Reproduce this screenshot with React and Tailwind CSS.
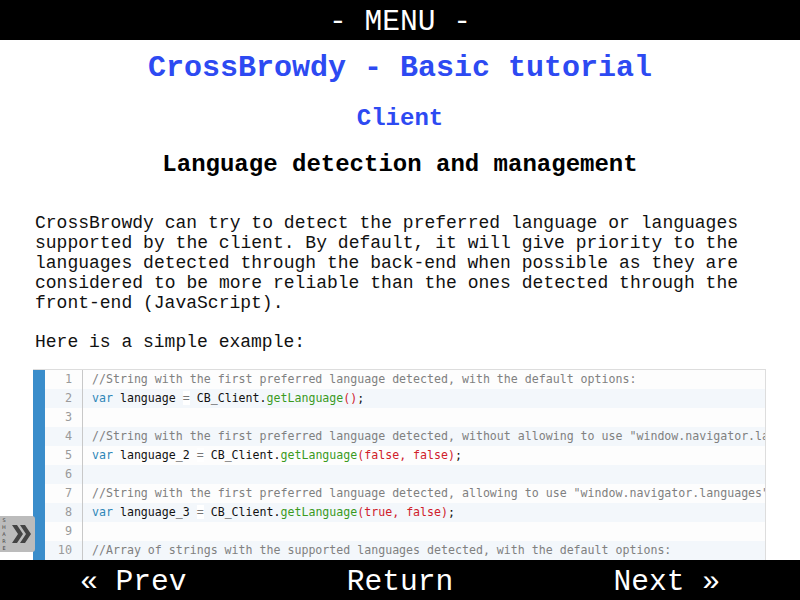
import React from 'react'

const C = ({ children }) => <span className="text-[#808080]">{children}</span>
const K = ({ children }) => <span className="text-[#2e86b8]">{children}</span>
const F = ({ children }) => <span className="text-[#3a9a1e]">{children}</span>
const R = ({ children }) => <span className="text-[#d0202a]">{children}</span>
const Eq = () => <span className="bg-white text-[#777]">=</span>

const lines = [
  <C>//String with the first preferred language detected, with the default options:</C>,
  <><K>var</K> language <Eq/> CB_Client.<F>getLanguage</F><R>()</R>;</>,
  null,
  <C>//String with the first preferred language detected, without allowing to use "window.navigator.languages" (default: true):</C>,
  <><K>var</K> language_2 <Eq/> CB_Client.<F>getLanguage</F><R>(false, false)</R>;</>,
  null,
  <C>//String with the first preferred language detected, allowing to use "window.navigator.languages" but without back-end:</C>,
  <><K>var</K> language_3 <Eq/> CB_Client.<F>getLanguage</F><R>(true, false)</R>;</>,
  null,
  <C>//Array of strings with the supported languages detected, with the default options:</C>,
  <><K>var</K> languages <Eq/> CB_Client.<F>getLanguages</F><R>()</R>;</>,
  null,
]

function CodeBlock(){
  return (
    <div className="ml-[33px] mr-[34px] flex border-t border-r border-[#dddddd] bg-[#fdfdfd] overflow-hidden">
      <div className="w-[12px] shrink-0 bg-[#3a8dcb]"/>
      <div className="flex-1 min-w-0 font-['DejaVu_Sans_Mono',monospace] text-[11.3px]">
        {lines.map((l, i) => (
          <div key={i} className={`flex h-[19px] items-center ${i % 2 === 1 ? 'bg-[#f3f7fb]' : ''}`}>
            <div className="w-[38px] shrink-0 h-full flex items-center justify-end pr-[10px] border-r border-[#c8c8c8] text-[#9a9a9a] text-[11.8px]">{i + 1}</div>
            <div className="pl-[9px] whitespace-pre text-[#111] text-[11.6px]">{l}</div>
          </div>
        ))}
      </div>
    </div>
  )
}

export default function App(){
  return (
    <div className="relative w-[800px] h-[600px] flex flex-col bg-white font-['Liberation_Mono',monospace] overflow-hidden">
      <div className="h-10 shrink-0 bg-black text-white flex items-center justify-center pt-[3px] text-[29.6px] leading-[34px]">- MENU -</div>
      <div className="flex-1 min-h-0 overflow-hidden">
        <h1 className="mt-[10px] text-center text-[30px] leading-[36px] font-bold text-[#2d4af2]">CrossBrowdy - Basic tutorial</h1>
        <h2 className="mt-[19px] text-center text-[24px] leading-[28px] font-bold text-[#2d4af2]">Client</h2>
        <h3 className="mt-[18px] text-center text-[24px] leading-[28px] font-bold text-black">Language detection and management</h3>
        <p className="mt-[34px] ml-[35px] mr-[62px] text-[18px] leading-[20px] text-justify text-[#111]">
          CrossBrowdy can try to detect the preferred language or languages supported by the client. By default, it will give priority to the languages detected through the back-end when possible as they are considered to be more reliable than the ones detected through the front-end (JavaScript).
        </p>
        <p className="mt-[19px] mx-[35px] text-[18px] leading-[20px] text-[#111]">Here is a simple example:</p>
        <div className="mt-[17px]">
          <CodeBlock/>
        </div>
      </div>
      <div className="h-10 shrink-0 bg-black text-white grid grid-cols-3 items-center pt-[4px] text-[29.6px] leading-[34px]">
        <div className="text-center">« Prev</div>
        <div className="text-center">Return</div>
        <div className="text-center">Next »</div>
      </div>
      <div className="absolute left-0 top-[516px] w-[35px] h-[36px] bg-[#bcbcbc] rounded-r-[3px] flex items-center">
        <div className="w-[8px] flex flex-col items-center text-[5px] leading-[7px] font-['DejaVu_Sans',sans-serif] text-[#444]">
          <span>S</span><span>H</span><span>A</span><span>R</span><span>E</span>
        </div>
        <svg width="24" height="24" viewBox="0 0 24 24" className="ml-[2px]">
          <path d="M2 3 L7 3 L13 12 L7 21 L2 21 L8 12 Z" fill="#444"/>
          <path d="M10 3 L15 3 L21 12 L15 21 L10 21 L16 12 Z" fill="#444"/>
        </svg>
      </div>
    </div>
  )
}
